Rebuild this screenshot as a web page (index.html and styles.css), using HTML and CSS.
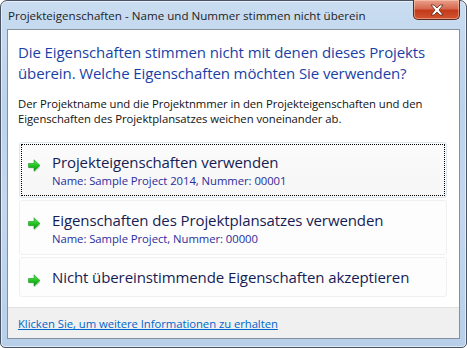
FILE: index.html
```html
<!DOCTYPE html>
<html lang="de">
<head>
<meta charset="utf-8">
<title>Projekteigenschaften</title>
<link rel="stylesheet" href="styles.css">
</head>
<body>
<div class="window">
  <div class="titlebar">
    <span class="title">Projekteigenschaften - Name und Nummer stimmen nicht überein</span>
    <div class="close">
      <svg width="16" height="12" viewBox="0 0 16 12">
        <path d="M2 1 L5 1 L8 4 L11 1 L14 1 L10 6 L14 11 L11 11 L8 8 L5 11 L2 11 L6 6 Z" fill="#fff" stroke="#5a2a1c" stroke-width="0.8" stroke-linejoin="round"/>
      </svg>
    </div>
  </div>
  <div class="client">
    <div class="content">
      <h1 class="instruction">Die Eigenschaften stimmen nicht mit denen dieses Projekts überein. Welche Eigenschaften möchten Sie verwenden?</h1>
      <p class="body-text">Der Projektname und die Projektnmmer in den Projekteigenschaften und den Eigenschaften des Projektplansatzes weichen voneinander ab.</p>
      <div class="links">
        <div class="cmd cmd-focus">
          <svg class="arrow" width="14" height="14" viewBox="0 0 14 14"><use href="#arr"/></svg>
          <div class="cmd-text">
            <div class="cmd-title">Projekteigenschaften verwenden</div>
            <div class="cmd-note">Name: Sample Project 2014, Nummer: 00001</div>
          </div>
        </div>
        <div class="cmd">
          <svg class="arrow" width="14" height="14" viewBox="0 0 14 14"><use href="#arr"/></svg>
          <div class="cmd-text">
            <div class="cmd-title">Eigenschaften des Projektplansatzes verwenden</div>
            <div class="cmd-note">Name: Sample Project, Nummer: 00000</div>
          </div>
        </div>
        <div class="cmd cmd-single">
          <svg class="arrow" width="14" height="14" viewBox="0 0 14 14"><use href="#arr"/></svg>
          <div class="cmd-text">
            <div class="cmd-title">Nicht übereinstimmende Eigenschaften akzeptieren</div>
          </div>
        </div>
      </div>
    </div>
    <div class="footer">
      <a class="more" href="#">Klicken Sie, um weitere Informationen zu erhalten</a>
    </div>
  </div>
</div>
<svg width="0" height="0" class="defs">
  <defs>
    <linearGradient id="g" x1="0" y1="0" x2="0" y2="1">
      <stop offset="0" stop-color="#6ee868"/>
      <stop offset="0.5" stop-color="#22c422"/>
      <stop offset="1" stop-color="#0a9214"/>
    </linearGradient>
    <g id="arr">
      <path d="M1 7.5 L6.5 7.5 L6.5 3.5 L12.5 8.5 L6.5 13.5 L6.5 9.5 L1 9.5 Z" fill="#c8c8c8" opacity="0.6"/>
      <path d="M0.5 4.5 L6 4.5 L6 0.8 L12 6.5 L6 12.2 L6 8.5 L0.5 8.5 Z" fill="url(#g)" stroke="#16951a" stroke-width="0.6" stroke-linejoin="round"/>
    </g>
  </defs>
</svg>
</body>
</html>
```
FILE: styles.css
```css
* { box-sizing: border-box; }
html, body { margin: 0; padding: 0; }
body {
  width: 467px;
  height: 348px;
  background: #ffffff;
  font-family: "Open Sans", "Noto Sans", sans-serif;
  overflow: hidden;
}
.defs { position: absolute; }
.window {
  width: 467px;
  height: 348px;
  border: 1px solid #4a5464;
  border-radius: 7px 7px 5px 5px;
  background: linear-gradient(180deg, #c9dcf0 0%, #bcd3ec 30%, #c3d8ef 60%, #b7cfe9 100%);
  display: flex;
  flex-direction: column;
  padding: 0 6px 8px 6px;
  box-shadow: inset 0 0 0 1px rgba(255,255,255,0.55);
}
.titlebar {
  height: 28px;
  display: flex;
  justify-content: space-between;
  align-items: flex-start;
  flex: none;
}
.title {
  font-size: 11.6px;
  color: #1e1e1e;
  padding: 7px 0 0 1px;
  white-space: nowrap;
  letter-spacing: 0;
}
.close {
  width: 47px;
  height: 20px;
  margin-top: -1px;
  border: 1px solid #5c2a1e;
  border-top: none;
  border-radius: 0 0 5px 5px;
  background: linear-gradient(180deg, #eaa08c 0%, #d66a50 45%, #c43a1a 55%, #d15430 100%);
  box-shadow: inset 0 0 0 1px rgba(255,220,200,0.45);
  display: flex;
  align-items: center;
  justify-content: center;
}
.client {
  flex: 1;
  border: 1px solid #83909f;
  background: #ffffff;
  display: flex;
  flex-direction: column;
}
.content {
  flex: 1;
  padding: 12px 10px 0 10px;
}
.instruction {
  margin: 0;
  font-weight: normal;
  font-size: 15px;
  line-height: 20.5px;
  color: #1b3fa6;
  letter-spacing: -0.1px;
}
.body-text {
  margin: 13px 0 0 0;
  font-size: 11.3px;
  line-height: 15px;
  color: #111;
  letter-spacing: -0.05px;
}
.links {
  margin-top: 16px;
  padding-left: 1px;
  padding-right: 2px;
  display: flex;
  flex-direction: column;
  gap: 2px;
}
.cmd {
  display: flex;
  align-items: flex-start;
  border: 1px solid #f0f0f0;
  border-radius: 3px;
  background: #fdfdfd;
  padding: 9px 0 0 8px;
  height: 55px;
}
.cmd-focus {
  height: 56px;
  border: 1px solid #dce6ee;
  background: linear-gradient(180deg, #fbfbfb, #f6f6f6);
  outline: 1px dotted #000;
  outline-offset: -3px;
}
.cmd-single {
  height: 40px;
}
.arrow {
  flex: none;
  margin-top: 7px;
  margin-right: 10px;
}
.cmd-title {
  font-size: 15px;
  line-height: 21px;
  color: #151c55;
  letter-spacing: -0.1px;
}
.cmd-note {
  font-size: 11.3px;
  line-height: 15px;
  color: #2a2d9c;
  letter-spacing: -0.05px;
}
.footer {
  flex: none;
  height: 31px;
  background: #f0f0f0;
  border-top: 1px solid #dfdfdf;
  padding: 8px 10px 0 10px;
  font-size: 11.3px;
  line-height: 15px;
}
.more {
  color: #0066cc;
  text-decoration: underline;
  letter-spacing: -0.05px;
}
```
